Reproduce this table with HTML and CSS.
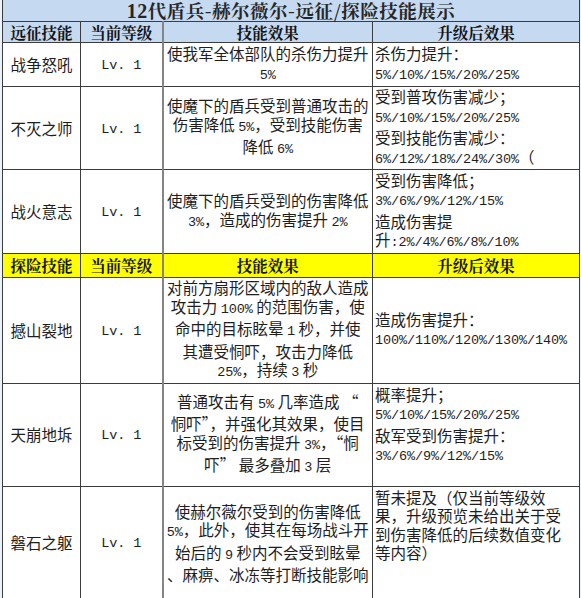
FILE: index.html
```html
<!DOCTYPE html>
<html lang="zh-CN">
<head>
<meta charset="utf-8">
<title>12代盾兵-赫尔薇尔-远征/探险技能展示</title>
<link rel="stylesheet" href="styles.css">
</head>
<body>
<table class="sheet">
  <colgroup>
    <col class="c1"><col class="c2"><col class="c3"><col class="c4">
  </colgroup>
  <tr class="r-title">
    <td class="title" colspan="4"><span class="tn">12</span>代盾兵-赫尔薇尔-远征/探险技能展示</td>
  </tr>
  <tr class="r-head blue">
    <td class="head">远征技能</td><td class="head lv">当前等级</td><td class="head">技能效果</td><td class="head">升级后效果</td>
  </tr>
  <tr class="r1">
    <td class="name">战争怒吼</td>
    <td class="level lv"><span class="n">Lv. 1</span></td>
    <td class="effect">使我军全体部队的杀伤力提升<br><span class="n">5%</span></td>
    <td class="up">杀伤力提升：<br><span class="n">5%/10%/15%/20%/25%</span></td>
  </tr>
  <tr class="r2">
    <td class="name">不灭之师</td>
    <td class="level lv"><span class="n">Lv. 1</span></td>
    <td class="effect">使魔下的盾兵受到普通攻击的<br>伤害降低 <span class="n">5%</span>，受到技能伤害<br>降低 <span class="n">6%</span></td>
    <td class="up">受到普攻伤害减少；<br><span class="n">5%/10%/15%/20%/25%</span><br>受到技能伤害减少：<br><span class="n">6%/12%/18%/24%/30%</span>（</td>
  </tr>
  <tr class="r3">
    <td class="name">战火意志</td>
    <td class="level lv"><span class="n">Lv. 1</span></td>
    <td class="effect">使魔下的盾兵受到的伤害降低<br><span class="n">3%</span>，造成的伤害提升 <span class="n">2%</span></td>
    <td class="up">受到伤害降低；<br><span class="n">3%/6%/9%/12%/15%</span><br>造成伤害提<br>升<span class="n">:2%/4%/6%/8%/10%</span></td>
  </tr>
  <tr class="r-head yellow">
    <td class="head">探险技能</td><td class="head lv">当前等级</td><td class="head">技能效果</td><td class="head">升级后效果</td>
  </tr>
  <tr class="r4">
    <td class="name">撼山裂地</td>
    <td class="level lv"><span class="n">Lv. 1</span></td>
    <td class="effect">对前方扇形区域内的敌人造成<br>攻击力 <span class="n">100%</span> 的范围伤害，使<br>命中的目标眩晕 <span class="n">1</span> 秒，并使<br>其遭受恫吓，攻击力降低<br><span class="n">25%</span>，持续 <span class="n">3</span> 秒</td>
    <td class="up">造成伤害提升：<br><span class="n">100%/110%/120%/130%/140%</span></td>
  </tr>
  <tr class="r5">
    <td class="name">天崩地坼</td>
    <td class="level lv"><span class="n">Lv. 1</span></td>
    <td class="effect">普通攻击有 <span class="n">5%</span> 几率造成 “<br>恫吓”，并强化其效果，使目<br>标受到的伤害提升 <span class="n">3%</span>，“恫<br>吓” 最多叠加 <span class="n">3</span> 层</td>
    <td class="up top">概率提升；<br><span class="n">5%/10%/15%/20%/25%</span><br>敌军受到伤害提升：<br><span class="n">3%/6%/9%/12%/15%</span></td>
  </tr>
  <tr class="r6">
    <td class="name">磐石之躯</td>
    <td class="level lv"><span class="n">Lv. 1</span></td>
    <td class="effect">使赫尔薇尔受到的伤害降低<br><span class="n">5%</span>，此外，使其在每场战斗开<br>始后的 <span class="n">9</span> 秒内不会受到眩晕<br>、麻痹、冰冻等打断技能影响</td>
    <td class="up top">暂未提及（仅当前等级效<br>果，升级预览未给出关于受<br>到伤害降低的后续数值变化<br>等内容）</td>
  </tr>
</table>
</body>
</html>
```
FILE: styles.css
```css
html, body {
  margin: 0;
  padding: 0;
  background: #eaf2fb;
}
body {
  font-family: "Noto Sans CJK SC", "Liberation Sans", sans-serif;
  color: #1e1e1e;
}
.sheet {
  margin-left: 2px;
  width: 577px;
  table-layout: fixed;
  border-collapse: collapse;
  background: #ffffff;
}
.c1 { width: 78px; }
.c2 { width: 82px; }
.c3 { width: 210px; }
.c4 { width: 207px; }

.sheet td {
  border: 1px solid #3c3c3c;
  padding: 0 1px;
  white-space: nowrap;
  overflow: hidden;
  font-size: 15.5px;
  line-height: 18.5px;
  vertical-align: middle;
}
.sheet td.lv {
  border-right: 2px solid #858585;
}
.r-title { height: 21px; }
.r-head { height: 21px; }
.r1 { height: 44px; }
.r2 { height: 82px; }
.r3 { height: 84px; }
.r-head.yellow { height: 24px; }
.r4 { height: 101px; }
.r5 { height: 103px; }
.r6 { height: 113px; }

.sheet td.title {
  background: #c5d9f1;
  text-align: center;
  font-family: "Noto Serif CJK SC", "Noto Sans CJK SC", serif;
  font-weight: 700;
  font-size: 18.5px;
  line-height: 20px;
  letter-spacing: 0.5px;
  border-top: none;
  overflow: visible;
  color: #262626;
}
.tn {
  font-family: "Liberation Serif", serif;
  font-size: 20px;
}
.blue td { background: #c5d9f1; }
.yellow td { background: #ffff00; }
.sheet td.head {
  text-align: center;
  font-family: "Noto Serif CJK SC", "Noto Sans CJK SC", serif;
  font-weight: 700;
  font-size: 15.5px;
  line-height: 19px;
  color: #141414;
}
.sheet td.name {
  text-align: center;
}
.sheet td.level {
  text-align: center;
}
.sheet td.effect {
  text-align: center;
}
.sheet td.up {
  text-align: left;
  padding-left: 2px;
}
.sheet td.top {
  vertical-align: top;
  padding-top: 1px;
}
.n {
  font-family: "Liberation Mono", monospace;
  font-size: 13.5px;
  letter-spacing: -0.1px;
}
```
